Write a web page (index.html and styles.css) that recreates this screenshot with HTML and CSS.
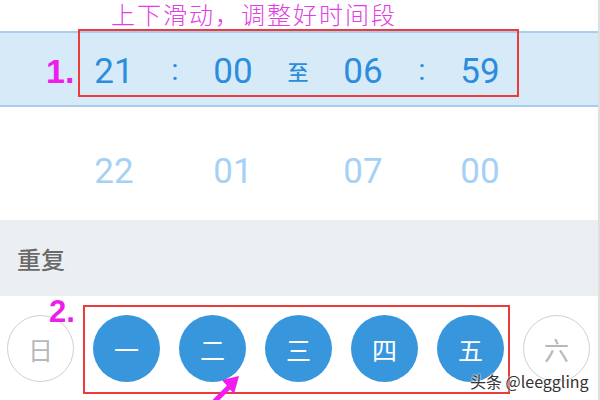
FILE: index.html
```html
<!DOCTYPE html>
<html lang="zh-CN">
<head>
  <meta charset="UTF-8">
  <title>时间段设置</title>
  <link rel="stylesheet" href="styles.css">
</head>
<body>
  <div class="screen">
    <div class="hint">上下滑动，调整好时间段</div>

    <div class="picker current">
      <span>21</span><span class="sep">:</span><span>00</span>
      <span class="to">至</span>
      <span>06</span><span class="sep">:</span><span>59</span>
    </div>

    <div class="picker next">
      <span>22</span><span></span><span>01</span>
      <span></span>
      <span>07</span><span></span><span>00</span>
    </div>

    <div class="section-title">重复</div>

    <div class="weekdays">
      <span class="day">日</span>
      <span class="day on">一</span>
      <span class="day on">二</span>
      <span class="day on">三</span>
      <span class="day on">四</span>
      <span class="day on">五</span>
      <span class="day">六</span>
    </div>

    <!-- markup drawn on top -->
    <div class="mark step1">1.</div>
    <div class="frame frame1"></div>
    <div class="mark step2">2.</div>
    <div class="frame frame2"></div>
    <svg class="arrow" width="40" height="34" viewBox="0 0 40 34">
      <path d="M4 34 L22 16" stroke="#f01cf0" stroke-width="5" fill="none"/>
      <polygon points="29,8 12,12 24,26" fill="#f01cf0"/>
    </svg>
    <div class="watermark">头条 @leeggling</div>
  </div>
</body>
</html>
```

FILE: styles.css
```css
body {
  margin: 0;
  background: #fff;
  font-family: Roboto, "Noto Sans CJK SC", sans-serif;
}
.screen {
  position: relative;
  width: 600px;
  height: 400px;
  overflow: hidden;
  border-right: 2px solid #dde0e3;
  box-sizing: border-box;
}
.hint {
  height: 28px;
  margin-bottom: 3px;
  padding-left: 111px;
  font-family: "Noto Sans CJK SC", sans-serif;
  font-size: 24px;
  font-weight: 300;
  line-height: 28px;
  color: #e23ee2;
  letter-spacing: 2px;
}
.picker {
  display: grid;
  grid-template-columns: 84px 60px 62px 54px 76px 54px 64px 52px;
  align-items: center;
  font-size: 35px;
  text-align: center;
}
.picker span:first-child {
  grid-column: 2;
}
.current {
  height: 76px;
  padding-top: 4px;
  box-sizing: border-box;
  background: #d7eaf8;
  border-top: 2px solid #a9cdec;
  border-bottom: 2px solid #a9cdec;
  color: #2b8ddc;
}
.sep {
  font-size: 30px;
  padding-bottom: 4px;
}
.to {
  font-family: "Noto Sans CJK SC", sans-serif;
  font-size: 21px;
  font-weight: 500;
}
.next {
  height: 113px;
  padding-top: 15px;
  box-sizing: border-box;
  color: #a6d1f4;
}
.section-title {
  height: 76px;
  background: #eceff2;
  padding-left: 17px;
  font-family: "Noto Sans CJK SC", sans-serif;
  font-size: 24px;
  font-weight: 500;
  line-height: 78px;
  color: #6a6a6a;
}
.weekdays {
  display: flex;
  gap: 19px;
  padding: 19px 0 0 7px;
}
.day {
  width: 65px;
  height: 65px;
  border: 1px solid #d0d0d0;
  border-radius: 50%;
  display: flex;
  align-items: center;
  justify-content: center;
  font-family: "Noto Sans CJK SC", sans-serif;
  font-size: 25px;
  font-weight: 400;
  color: #b8b8b8;
}
.day.on {
  width: 67px;
  height: 67px;
  border: none;
  background: #3896dc;
  color: #fff;
}
.mark {
  position: absolute;
  font-family: "Liberation Sans", sans-serif;
  font-weight: bold;
  color: #ec1eec;
}
.step1 {
  left: 46px;
  top: 52px;
  font-size: 34px;
}
.step2 {
  left: 49px;
  top: 294px;
  font-size: 31px;
}
.frame {
  position: absolute;
  border: 2px solid #ec3b3b;
}
.frame1 {
  left: 78px;
  top: 29px;
  width: 437px;
  height: 64px;
}
.frame2 {
  left: 83px;
  top: 305px;
  width: 423px;
  height: 85px;
}
.arrow {
  position: absolute;
  left: 210px;
  top: 368px;
}
.watermark {
  position: absolute;
  left: 470px;
  top: 369px;
  font-family: "Noto Sans CJK SC", sans-serif;
  font-size: 16px;
  color: #333;
  text-shadow: 0 0 2px #fff, 0 0 2px #fff;
}
```
